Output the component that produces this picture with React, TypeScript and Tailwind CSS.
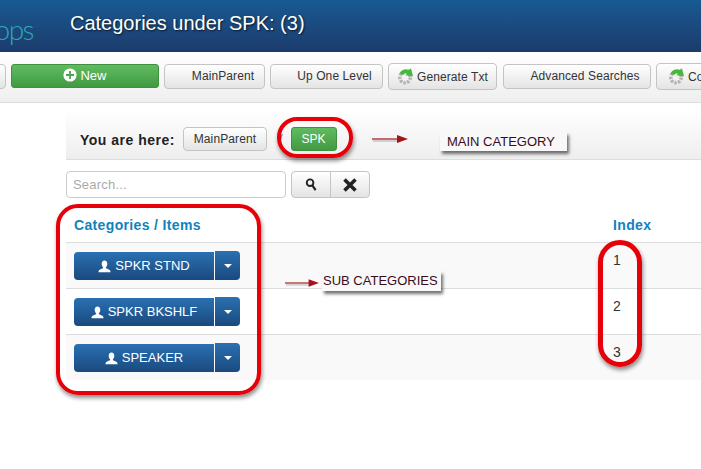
const FONT = "font-['Liberation_Sans',Arial,sans-serif]";
const BTN =
  "flex items-center justify-center whitespace-nowrap rounded-[4px] border border-[#c4c4c4] bg-gradient-to-b from-white to-[#e4e4e4] text-[#333] text-[12px] tracking-[0.1px] shadow-[inset_0_1px_0_white]";
const GREEN =
  "flex items-center justify-center rounded-[3px] border border-[#3f9140] bg-gradient-to-b from-[#60bc60] to-[#429a43] text-white";
const BLUE = "bg-gradient-to-b from-[#2a70b2] to-[#1a4a7e]";

const rows = [
  { name: "SPKR STND", index: 1 },
  { name: "SPKR BKSHLF", index: 2 },
  { name: "SPEAKER", index: 3 },
];

const GearIcon = () => (
  <svg width="17" height="17" viewBox="0 0 17 17" className="mr-[3px] shrink-0">
    <circle cx="8" cy="9.5" r="5.2" fill="none" stroke="#b4b4b4" strokeWidth="3.6" strokeDasharray="2.4 1.2" />
    <circle cx="8" cy="9.5" r="3" fill="#f2f2f2" />
    <path d="M2.5 5.5 A7 7 0 0 1 11.5 1.8 L14 0.4 L16 8.2 L8.5 7.2 L10.4 5.6 A3.5 3.5 0 0 0 6 7 Z" fill="#48b83c" />
  </svg>
);

const UserIcon = () => (
  <svg width="13" height="13" viewBox="0 0 13 13" className="mr-[4px] shrink-0" fill="white">
    <path d="M6.5 0.5 C8.3 0.5 9.3 1.9 9.3 3.7 C9.3 5.3 8.6 6.6 7.9 7.2 L7.9 8.3 C9.8 9 12 9.8 12.4 11 L12.5 12.2 L0.5 12.2 L0.6 11 C1 9.8 3.2 9 5.1 8.3 L5.1 7.2 C4.4 6.6 3.7 5.3 3.7 3.7 C3.7 1.9 4.7 0.5 6.5 0.5 Z" />
  </svg>
);

const Arrow = ({ className }: { className: string }) => (
  <svg viewBox="0 0 36 10" className={className}>
    <path d="M1 7 H26" stroke="#000" strokeOpacity="0.15" strokeWidth="2" />
    <path d="M0 5 H26" stroke="#a5121c" strokeWidth="1.2" />
    <path d="M25 1 L36 5 L25 9 Z" fill="#a5121c" />
  </svg>
);

const Callout = ({ className, children }: { className: string; children: string }) => (
  <div
    className={`absolute whitespace-nowrap bg-[#f8f8f8] text-[#3b0b1c] text-[13px] leading-[19px] shadow-[2px_3px_3px_rgba(0,0,0,0.55)] ${className}`}
  >
    {children}
  </div>
);

const Ring = ({ className }: { className: string }) => (
  <div className={`absolute border-[#e60008] shadow-[1px_3px_4px_rgba(0,0,0,0.45)] ${className}`} />
);

export default function App() {
  return (
    <div className={`relative h-[469px] w-[701px] overflow-hidden bg-white ${FONT}`}>
      {/* HEADER */}
      <div className="flex h-[52px] items-center bg-gradient-to-b from-[#175a92] to-[#1c3b6c]">
        <div className="flex h-full w-[70px] shrink-0 justify-end overflow-hidden pr-[37px] pt-[12px] font-['Lato',sans-serif] text-[28px] font-light leading-[34px] tracking-[-1.5px] text-[#2ba9b5]">
          ops
        </div>
        <h1 className="pb-[6px] text-[20px] text-white [text-shadow:1px_1px_2px_rgba(0,0,0,0.7)]">
          Categories under SPK: (3)
        </h1>
      </div>

      {/* TOOLBAR */}
      <div className="flex h-[51px] items-center gap-[5px] overflow-hidden border-b border-[#ddd] bg-gradient-to-b from-white to-[#efefef] pb-[2px]">
        <div className={`${BTN} ml-[-20px] h-[25px] w-[26px] shrink-0`} />
        <div className={`${GREEN} h-[24px] w-[148px] shrink-0 text-[13px]`}>
          <svg width="14" height="14" viewBox="0 0 14 14" className="mb-[2px] mr-[3px]">
            <circle cx="7" cy="7" r="6.6" fill="white" />
            <path d="M7 3 V11 M3 7 H11" stroke="#4aa64b" strokeWidth="1.8" />
          </svg>
          New
        </div>
        <div className={`${BTN} h-[25px] w-[101px] shrink-0 pl-[17px]`}>MainParent</div>
        <div className={`${BTN} h-[25px] w-[113px] shrink-0 pl-[16px]`}>Up One Level</div>
        <div className={`${BTN} h-[27px] w-[109px] shrink-0 pt-px`}>
          <GearIcon />
          Generate Txt
        </div>
        <div className={`${BTN} ml-px h-[25px] w-[148px] shrink-0 pl-[16px]`}>Advanced Searches</div>
        <div className={`${BTN} h-[27px] w-[110px] shrink-0 justify-start pl-[11px] pt-px`}>
          <GearIcon />
          Configure
        </div>
      </div>

      <div className="flex">
        {/* SIDE LINK CLIPPED AT THE EDGE */}
        <div className="w-[66px] shrink-0 overflow-hidden pt-[53px]">
          <span className="ml-[-5px] block text-[13px] leading-[14px] text-[#0b8b8b]">t</span>
        </div>

        <div className="min-w-0 flex-1">
          {/* BREADCRUMB */}
          <div className="mt-[7px] flex h-[50px] items-center border-b border-[#ddd] bg-gradient-to-b from-white to-[#eeeeee] pl-[14px] pt-[9px]">
            <span className="mt-[2px] text-[14px] font-bold tracking-[0.5px] text-[#222]">You are here:</span>
            <div className={`${BTN} ml-[8px] h-[24px] w-[84px]`}>MainParent</div>
            <span className="ml-[12px] text-[13px] text-[#666]">/</span>
            <div className={`${GREEN} ml-[8px] h-[24px] w-[46px] text-[12px]`}>SPK</div>
          </div>

          {/* SEARCH */}
          <div className="mt-[11px] flex h-[27px] items-center">
            <input
              readOnly
              placeholder="Search..."
              className="h-full w-[220px] rounded-[4px] border border-[#ccc] bg-white px-[6px] text-[13px] tracking-[0.2px] placeholder:text-[#aaa]"
            />
            <div className="ml-[5px] flex h-full">
              <div className={`${BTN} h-full w-[40px] rounded-r-none`}>
                <svg width="12" height="13" viewBox="0 0 13 14" fill="none" stroke="#222" strokeWidth="2">
                  <circle cx="5.5" cy="5" r="3.6" />
                  <path d="M8 8 L11.5 13" strokeWidth="2.4" />
                </svg>
              </div>
              <div className={`${BTN} ml-[-1px] h-full w-[40px] rounded-l-none`}>
                <svg width="14" height="14" viewBox="0 0 14 14" stroke="#222" strokeWidth="3.6">
                  <path d="M1.5 1.5 L12.5 12.5 M12.5 1.5 L1.5 12.5" />
                </svg>
              </div>
            </div>
          </div>

          {/* TABLE */}
          <div className="mt-[7px]">
            <div className="flex h-[37px] items-end pb-[7px] text-[14px] font-bold leading-[20px] tracking-[0.35px] text-[#0f82c0]">
              <div className="w-[547px] shrink-0 pl-[8px]">Categories / Items</div>
              <div>Index</div>
            </div>
            <div>
              {rows.map((row) => (
                <div
                  key={row.index}
                  className="flex h-[46px] border-t border-[#ddd] odd:bg-[#f9f9f9]"
                >
                  <div className="flex w-[547px] shrink-0 pl-[8px] pt-[8px]">
                    <div className={`${BLUE} mt-px flex h-[28px] w-[140px] items-center justify-center rounded-l-[4px] text-[13px] text-white`}>
                      <UserIcon />
                      {row.name}
                    </div>
                    <div className={`${BLUE} ml-px flex h-[29px] w-[25px] items-center justify-center rounded-r-[4px]`}>
                      <span className="h-0 w-0 border-x-[4px] border-t-[4px] border-x-transparent border-t-white" />
                    </div>
                  </div>
                  <div className="pt-[7px] text-[14px] leading-[20px] text-[#333]">{row.index}</div>
                </div>
              ))}
            </div>
          </div>
        </div>
      </div>

      {/* ANNOTATIONS OVER THE PAGE */}
      <Ring className="left-[277px] top-[117px] h-[41px] w-[76px] rounded-[20px] border-[4px]" />
      <Ring className="left-[56px] top-[204px] h-[191px] w-[205px] rounded-[22px] border-[4px]" />
      <Ring className="left-[598px] top-[240px] h-[127px] w-[44px] rounded-[22px] border-[5px]" />
      <Arrow className="absolute left-[372px] top-[134px] h-[10px] w-[36px]" />
      <Callout className="left-[440px] top-[132px] h-[19px] w-[127px] pl-[7px]">MAIN CATEGORY</Callout>
      <Arrow className="absolute left-[285px] top-[278px] h-[10px] w-[34px]" />
      <Callout className="left-[322px] top-[271px] h-[20px] w-[119px] pl-[1px]">SUB CATEGORIES</Callout>
    </div>
  );
}
